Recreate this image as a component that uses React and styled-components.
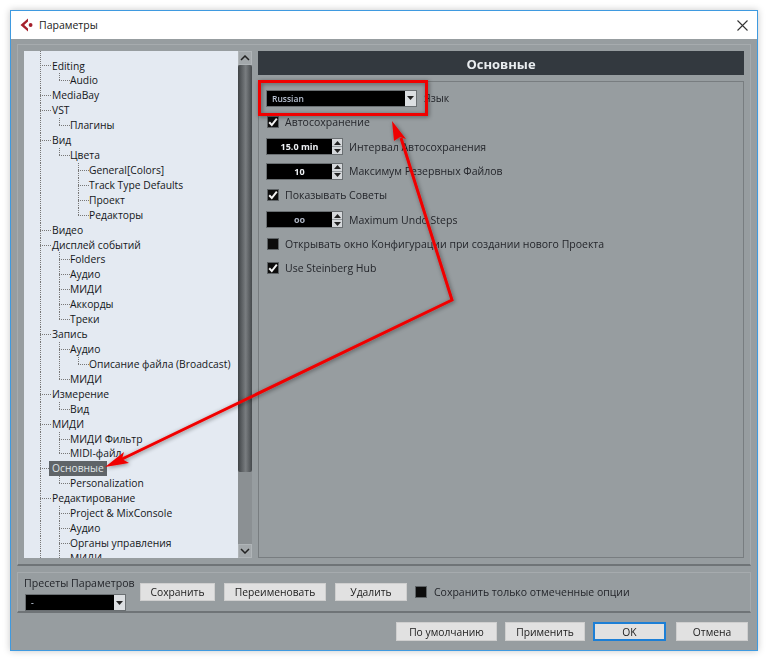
import styled, { createGlobalStyle } from 'styled-components';

const GlobalStyle = createGlobalStyle`
  * { box-sizing: border-box; }
  body {
    margin: 0;
    background: #ffffff;
    font-family: 'Open Sans', 'Noto Sans', sans-serif;
  }
`;

const treeItems = [
  [0, 'Editing'], [1, 'Audio'], [0, 'MediaBay'], [0, 'VST'], [1, 'Плагины'],
  [0, 'Вид'], [1, 'Цвета'], [2, 'General[Colors]'], [2, 'Track Type Defaults'],
  [2, 'Проект'], [2, 'Редакторы'], [0, 'Видео'], [0, 'Дисплей событий'],
  [1, 'Folders'], [1, 'Аудио'], [1, 'МИДИ'], [1, 'Аккорды'], [1, 'Треки'],
  [0, 'Запись'], [1, 'Аудио'], [2, 'Описание файла (Broadcast)'], [1, 'МИДИ'],
  [0, 'Измерение'], [1, 'Вид'], [0, 'МИДИ'], [1, 'МИДИ Фильтр'], [1, 'MIDI-файл'],
  [0, 'Основные', true], [1, 'Personalization'], [0, 'Редактирование'],
  [1, 'Project & MixConsole'], [1, 'Аудио'], [1, 'Органы управления'], [1, 'МИДИ'],
];

// does this row's level carry on below the row (same level before a shallower one)
const hasNextAt = (index, level) => {
  for (let i = index + 1; i < treeItems.length; i++) {
    if (treeItems[i][0] < level) return false;
    if (treeItems[i][0] === level) return true;
  }
  return level <= 1; // the list goes on below the visible part
};

function TreeRow({ index, level, label, selected }) {
  const passes = [];
  for (let l = 0; l < level; l++) passes.push(hasNextAt(index, l));
  return (
    <Row>
      {passes.map((on, l) => <Pass key={l} $on={on} />)}
      <Elbow $last={!hasNextAt(index, level)} $root={level === 0} />
      <Label $selected={selected}>{label}</Label>
    </Row>
  );
}

const CheckMark = () => (
  <svg width="10" height="10" viewBox="0 0 10 10">
    <path d="M1.2 5.2 L3.8 8 L8.8 1.6" fill="none" stroke="#f2f2f2" strokeWidth="2" />
  </svg>
);

const Triangle = ({ down }) => (
  <svg width="7" height="4" viewBox="0 0 7 4">
    <path d={down ? 'M0 0 H7 L3.5 4 Z' : 'M0 4 H7 L3.5 0 Z'} fill="#222" />
  </svg>
);

const Chevron = ({ down }) => (
  <svg width="10" height="6" viewBox="0 0 10 6">
    <path d={down ? 'M1 1 L5 5 L9 1' : 'M1 5 L5 1 L9 5'} fill="none" stroke="#222" strokeWidth="1.5" />
  </svg>
);

const Spin = ({ value, dim }) => (
  <SpinBox>
    <SpinValue $dim={dim}>{value}</SpinValue>
    <Steppers>
      <Stepper><Triangle /></Stepper>
      <Stepper><Triangle down /></Stepper>
    </Steppers>
  </SpinBox>
);

const Logo = () => (
  <svg width="14" height="14" viewBox="0 0 14 14">
    <path d="M8 0.5 L0.5 7 L8 13.5 L8 10.6 L4.2 7 L8 3.4 Z" fill="#a5202c" />
    <circle cx="10.6" cy="7" r="1.9" fill="#a5202c" />
  </svg>
);

const Annotations = () => (
  <Overlay width="768" height="662" viewBox="0 0 768 662">
    <defs>
      <filter id="arrowShadow" x="-10%" y="-10%" width="120%" height="120%">
        <feDropShadow dx="1" dy="1" stdDeviation="2" floodColor="#000" floodOpacity="0.45" />
      </filter>
    </defs>
    <g filter="url(#arrowShadow)">
      <rect x="259.5" y="81.5" width="167" height="33" fill="none" stroke="#f00000" strokeWidth="3" />
      <path d="M401 138 L452 300 L120 460" fill="none" stroke="#f00000" strokeWidth="3" />
      <path d="M392 121 L394 141 L400 137 L406 139 Z" fill="#f00000" />
      <path d="M105 467 L124 452 L122 459 L129 463 Z" fill="#f00000" />
    </g>
  </Overlay>
);

export default function App() {
  return (
    <Page>
      <GlobalStyle />
      <Window>
        <TitleBar>
          <Logo />
          <Title>Параметры</Title>
          <CloseIcon width="11" height="11" viewBox="0 0 11 11">
            <path d="M0.5 0.5 L10.5 10.5 M10.5 0.5 L0.5 10.5" stroke="#333" strokeWidth="1.1" />
          </CloseIcon>
        </TitleBar>
        <Body>
          <MainFrame>
            <TreeWrap>
              <Tree>
                <TopStub />
                {treeItems.map(([level, label, selected], i) => (
                  <TreeRow key={i} index={i} level={level} label={label} selected={selected} />
                ))}
              </Tree>
              <ScrollBar>
                <ScrollButton><Chevron /></ScrollButton>
                <ScrollThumb />
                <ScrollTrack />
                <ScrollButton><Chevron down /></ScrollButton>
              </ScrollBar>
            </TreeWrap>
            <RightColumn>
              <Header>Основные</Header>
              <Content>
                <OptionRow>
                  <Select $width={151}>
                    <SelectValue>Russian</SelectValue>
                    <SelectArrow><Triangle down /></SelectArrow>
                  </Select>
                  <LanguageLabel>Язык</LanguageLabel>
                </OptionRow>
                <OptionRow>
                  <CheckBox><CheckMark /></CheckBox>
                  <CheckLabel>Автосохранение</CheckLabel>
                </OptionRow>
                <OptionRow>
                  <Spin value="15.0 min" />
                  <SpinLabel>Интервал Автосохранения</SpinLabel>
                </OptionRow>
                <OptionRow>
                  <Spin value="10" />
                  <SpinLabel>Максимум Резервных Файлов</SpinLabel>
                </OptionRow>
                <OptionRow>
                  <CheckBox><CheckMark /></CheckBox>
                  <CheckLabel>Показывать Советы</CheckLabel>
                </OptionRow>
                <OptionRow>
                  <Spin value="oo" dim />
                  <SpinLabel>Maximum Undo Steps</SpinLabel>
                </OptionRow>
                <OptionRow>
                  <CheckBox />
                  <CheckLabel>Открывать окно Конфигурации при создании нового Проекта</CheckLabel>
                </OptionRow>
                <OptionRow>
                  <CheckBox><CheckMark /></CheckBox>
                  <CheckLabel>Use Steinberg Hub</CheckLabel>
                </OptionRow>
              </Content>
            </RightColumn>
          </MainFrame>
          <PresetFrame>
            <PresetColumn>
              <PresetLabel>Пресеты Параметров</PresetLabel>
              <Select $width={101}>
                <SelectValue>-</SelectValue>
                <SelectArrow><Triangle down /></SelectArrow>
              </Select>
            </PresetColumn>
            <PresetActions>
              <Button $width={75} $height={18}>Сохранить</Button>
              <Button $width={102} $height={18}>Переименовать</Button>
              <Button $width={72} $height={18}>Удалить</Button>
              <PresetCheck>
                <CheckBox />
                <CheckLabel>Сохранить только отмеченные опции</CheckLabel>
              </PresetCheck>
            </PresetActions>
          </PresetFrame>
          <Footer>
            <Button $width={101} $height={19}>По умолчанию</Button>
            <Button $width={80} $height={19}>Применить</Button>
            <Button $width={73} $height={19} $primary>OK</Button>
            <Button $width={72} $height={19}>Отмена</Button>
          </Footer>
        </Body>
      </Window>
      <Annotations />
    </Page>
  );
}

const Page = styled.div`
  position: relative;
  width: 768px;
  height: 662px;
  padding: 10px 0 0 10px;
  overflow: hidden;
  filter: blur(0.3px);
`;

const Window = styled.div`
  width: 748px;
  height: 641px;
  display: flex;
  flex-direction: column;
  border: 1px solid #3f9ae0;
  background: #979da0;
  box-shadow: 0 0 7px rgba(0, 0, 0, 0.22);
`;

const TitleBar = styled.div`
  height: 28px;
  flex: none;
  display: flex;
  align-items: center;
  padding: 0 9px 0 9px;
  background: #ffffff;
`;

const Title = styled.span`
  margin-left: 5px;
  font-size: 10.5px;
  color: #222;
`;

const CloseIcon = styled.svg`
  margin-left: auto;
`;

const Body = styled.div`
  flex: 1;
  display: flex;
  flex-direction: column;
  padding: 5px 6px 0 6px;
`;

const MainFrame = styled.div`
  height: 522px;
  display: flex;
  gap: 6px;
  padding: 6px;
  border: 1px solid #a6abae;
  border-bottom: 2px solid #6f7477;
`;

const TreeWrap = styled.div`
  width: 228px;
  flex: none;
  display: flex;
`;

const Tree = styled.div`
  width: 214px;
  flex: none;
  overflow: hidden;
  padding-left: 16px;
  background: #e4eaf2;
`;

const TopStub = styled.div`
  width: 1px;
  height: 7.5px;
  background: repeating-linear-gradient(to bottom, #777 0 1px, transparent 1px 2px);
`;

const Row = styled.div`
  height: 14.93px;
  display: flex;
`;

const Pass = styled.div`
  width: 19px;
  flex: none;
  background: ${(p) => (p.$on
    ? 'repeating-linear-gradient(to bottom, #777 0 1px, transparent 1px 2px) left top / 1px 100% no-repeat'
    : 'none')};
`;

const Elbow = styled.div`
  width: ${(p) => (p.$root ? 12 : 11)}px;
  flex: none;
  background:
    repeating-linear-gradient(to bottom, #777 0 1px, transparent 1px 2px) left top / 1px ${(p) => (p.$last ? '50%' : '100%')} no-repeat,
    repeating-linear-gradient(to right, #777 0 1px, transparent 1px 2px) left center / 100% 1px no-repeat;
`;

const Label = styled.span`
  height: 15px;
  line-height: 15px;
  font-size: 10.3px;
  white-space: nowrap;
  color: ${(p) => (p.$selected ? '#dfe3e6' : '#14171a')};
  background: ${(p) => (p.$selected ? '#5f6468' : 'transparent')};
  margin-left: ${(p) => (p.$selected ? '-3px' : '0')};
  padding: ${(p) => (p.$selected ? '0 3px' : '0')};
`;

const ScrollBar = styled.div`
  width: 14px;
  flex: none;
  display: flex;
  flex-direction: column;
  background: #8b9093;
`;

const ScrollButton = styled.div`
  height: 14px;
  flex: none;
  display: flex;
  align-items: center;
  justify-content: center;
  background: #a3a8ab;
  border: 1px solid #b0b5b8;
`;

const ScrollThumb = styled.div`
  height: 407px;
  flex: none;
  background: linear-gradient(to right, #3f4346, #797d80 55%, #45494c);
  border-radius: 2px;
`;

const ScrollTrack = styled.div`
  flex: 1;
  background: #8b9093;
`;

const RightColumn = styled.div`
  flex: 1;
  display: flex;
  flex-direction: column;
  gap: 6px;
`;

const Header = styled.div`
  height: 24px;
  flex: none;
  display: flex;
  align-items: center;
  justify-content: center;
  padding-top: 1px;
  background: #33393f;
  color: #e9edf0;
  font-size: 13px;
  font-weight: 700;
`;

const Content = styled.div`
  flex: 1;
  padding: 4px 0 0 7px;
  border: 1px solid #787d80;
`;

const OptionRow = styled.div`
  height: 24.3px;
  display: flex;
  align-items: center;
`;

const Select = styled.div`
  width: ${(p) => p.$width}px;
  height: 17px;
  flex: none;
  display: flex;
  background: #000;
  border: 1px solid #6a6f72;
`;

const SelectValue = styled.span`
  flex: 1;
  padding-left: 5px;
  font-size: 8.5px;
  font-weight: 600;
  line-height: 15px;
  color: #b7c0d0;
`;

const SelectArrow = styled.div`
  width: 11px;
  display: flex;
  align-items: center;
  justify-content: center;
  background: #dcdfe2;
`;

const LanguageLabel = styled.span`
  margin-left: 7px;
  font-size: 10.5px;
  color: #24262b;
`;

const CheckBox = styled.div`
  width: 12px;
  height: 12px;
  flex: none;
  margin-left: 1px;
  display: flex;
  align-items: center;
  justify-content: center;
  background: #0c0c0c;
  border: 1px solid #5d6265;
`;

const CheckLabel = styled.span`
  margin-left: 6px;
  font-size: 10.5px;
  white-space: nowrap;
  color: #24262b;
`;

const SpinBox = styled.div`
  width: 77px;
  height: 17px;
  flex: none;
  display: flex;
  border: 1px solid #6a6f72;
`;

const SpinValue = styled.div`
  flex: 1;
  background: #000;
  color: ${(p) => (p.$dim ? '#aeb6c4' : '#eef1f5')};
  font-size: 9px;
  font-weight: 700;
  line-height: 15px;
  text-align: center;
`;

const Steppers = styled.div`
  width: 10px;
  display: flex;
  flex-direction: column;
  gap: 1px;
`;

const Stepper = styled.div`
  flex: 1;
  display: flex;
  align-items: center;
  justify-content: center;
  background: #d5d8db;
`;

const SpinLabel = styled.span`
  margin-left: 6px;
  font-size: 10.5px;
  white-space: nowrap;
  color: #24262b;
`;

const PresetFrame = styled.div`
  height: 41px;
  flex: none;
  margin-top: 6px;
  display: flex;
  padding: 3px 0 0 7px;
  border: 1px solid #a6abae;
  border-bottom: 2px solid #6f7477;
`;

const PresetColumn = styled.div`
  width: 115px;
  flex: none;
  display: flex;
  flex-direction: column;
`;

const PresetLabel = styled.span`
  height: 18px;
  line-height: 15px;
  font-size: 10.6px;
  margin-left: -1px;
  white-space: nowrap;
  color: #24262b;
`;

const PresetActions = styled.div`
  display: flex;
  align-items: center;
  gap: 9px;
  height: 18px;
  margin-top: 7px;
`;

const PresetCheck = styled.div`
  display: flex;
  align-items: center;
  margin-left: -2px;

  ${CheckLabel} {
    margin-left: 7px;
  }
`;

const Footer = styled.div`
  display: flex;
  justify-content: flex-end;
  gap: 8px;
  margin-top: 9px;
  padding-right: 3px;
`;

const Button = styled.div`
  width: ${(p) => p.$width}px;
  height: ${(p) => p.$height}px;
  display: flex;
  align-items: center;
  justify-content: center;
  margin-right: ${(p) => (p.$primary ? '2px' : '0')};
  font-size: 10.3px;
  color: #1c1c1c;
  background: #e1e1e1;
  border: ${(p) => (p.$primary ? '2px solid #1c7fd6' : '1px solid #cfcfcf')};
`;

const Overlay = styled.svg`
  position: absolute;
  left: 0;
  top: 0;
  pointer-events: none;
`;
